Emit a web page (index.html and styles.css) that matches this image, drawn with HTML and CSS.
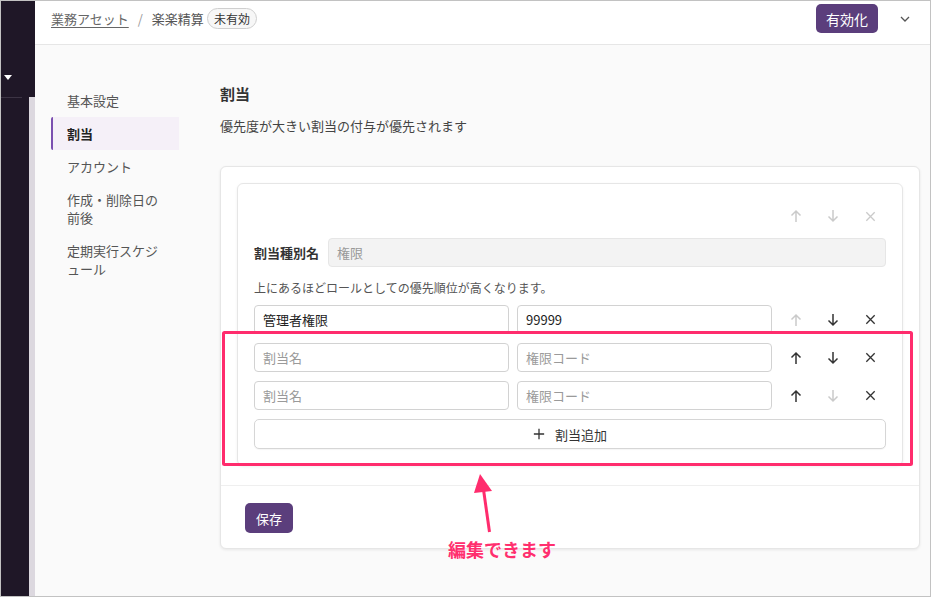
FILE: index.html
```html
<!DOCTYPE html>
<html lang="ja">
  <head>
    <meta charset="UTF-8" />
    <meta name="viewport" content="width=device-width, initial-scale=1.0" />
    <title>楽楽精算 - 割当</title>
    <link rel="stylesheet" href="styles.css">
  </head>
  <body>
    <div class="app">
      <aside class="rail">
        <div class="rail-top"><span class="caret"></span></div>
        <div class="rail-rule"></div>
        <div class="rail-bottom">
          <div class="rail-dark"></div>
          <div class="rail-light"></div>
        </div>
      </aside>

      <div class="main">
        <header class="topbar">
          <div class="crumbs">
            <a class="crumb-link" href="#">業務アセット</a>
            <span class="crumb-sep">/</span>
            <span class="crumb-current">楽楽精算</span>
            <span class="badge">未有効</span>
          </div>
          <div class="topbar-actions">
            <button class="btn-primary">有効化</button>
            <svg class="chevron" viewBox="0 0 10 6">
              <path d="M1 1l4 4 4-4" />
            </svg>
          </div>
        </header>

        <div class="page">
          <nav class="side-nav">
            <a href="#" class="nav-item">基本設定</a>
            <a href="#" class="nav-item active">割当</a>
            <a href="#" class="nav-item">アカウント</a>
            <a href="#" class="nav-item">作成・削除日の<br />前後</a>
            <a href="#" class="nav-item">定期実行スケジ<br />ュール</a>
          </nav>

          <section class="content">
            <h2 class="title">割当</h2>
            <p class="lead">優先度が大きい割当の付与が優先されます</p>

            <div class="card">
              <div class="card-body">
                <div class="group">
                  <div class="group-tools">
                    <button class="icon-btn muted"><svg viewBox="0 0 14 14"><path d="M7 13V2M2.5 6.5L7 2l4.5 4.5" /></svg></button>
                    <button class="icon-btn muted"><svg viewBox="0 0 14 14"><path d="M7 1v11M2.5 7.5L7 12l4.5-4.5" /></svg></button>
                    <button class="icon-btn muted"><svg class="x" viewBox="0 0 14 14"><path d="M2.5 2.5l9 9M11.5 2.5l-9 9" /></svg></button>
                  </div>

                  <div class="type-row">
                    <label class="type-label">割当種別名</label>
                    <input class="field field-disabled" type="text" value="権限" disabled />
                  </div>

                  <p class="hint">上にあるほどロールとしての優先順位が高くなります。</p>

                  <div class="rows">
                    <div class="row">
                      <input class="field" type="text" value="管理者権限" />
                      <input class="field" type="text" value="99999" />
                      <div class="row-tools">
                        <button class="icon-btn muted"><svg viewBox="0 0 14 14"><path d="M7 13V2M2.5 6.5L7 2l4.5 4.5" /></svg></button>
                        <button class="icon-btn"><svg viewBox="0 0 14 14"><path d="M7 1v11M2.5 7.5L7 12l4.5-4.5" /></svg></button>
                        <button class="icon-btn"><svg class="x" viewBox="0 0 14 14"><path d="M2.5 2.5l9 9M11.5 2.5l-9 9" /></svg></button>
                      </div>
                    </div>
                    <div class="row">
                      <input class="field" type="text" placeholder="割当名" />
                      <input class="field" type="text" placeholder="権限コード" />
                      <div class="row-tools">
                        <button class="icon-btn"><svg viewBox="0 0 14 14"><path d="M7 13V2M2.5 6.5L7 2l4.5 4.5" /></svg></button>
                        <button class="icon-btn"><svg viewBox="0 0 14 14"><path d="M7 1v11M2.5 7.5L7 12l4.5-4.5" /></svg></button>
                        <button class="icon-btn"><svg class="x" viewBox="0 0 14 14"><path d="M2.5 2.5l9 9M11.5 2.5l-9 9" /></svg></button>
                      </div>
                    </div>
                    <div class="row">
                      <input class="field" type="text" placeholder="割当名" />
                      <input class="field" type="text" placeholder="権限コード" />
                      <div class="row-tools">
                        <button class="icon-btn"><svg viewBox="0 0 14 14"><path d="M7 13V2M2.5 6.5L7 2l4.5 4.5" /></svg></button>
                        <button class="icon-btn muted"><svg viewBox="0 0 14 14"><path d="M7 1v11M2.5 7.5L7 12l4.5-4.5" /></svg></button>
                        <button class="icon-btn"><svg class="x" viewBox="0 0 14 14"><path d="M2.5 2.5l9 9M11.5 2.5l-9 9" /></svg></button>
                      </div>
                    </div>
                  </div>

                  <button class="add-btn">
                    <svg viewBox="0 0 14 14"><path d="M7 1v12M1 7h12" /></svg>
                    割当追加
                  </button>
                </div>
              </div>
              <div class="card-footer">
                <button class="btn-primary btn-save">保存</button>
              </div>
            </div>
          </section>
        </div>
      </div>

      <!-- annotation drawn over the screenshot -->
      <svg class="annotation" viewBox="0 0 931 597">
        <rect x="223.5" y="332.5" width="688" height="132" rx="1" />
        <path class="arrow-shaft" d="M489.5 532L483 486" />
        <path class="arrow-head" d="M480 474L474 493L492 491Z" />
      </svg>
      <div class="annotation-label">編集できます</div>
    </div>
  </body>
</html>
```

FILE: styles.css
```css
* {
    box-sizing: border-box;
}
body {
    margin: 0;
    font-family: "Noto Sans CJK JP", "Noto Sans", sans-serif;
    color: #333;
    background-color: #fff;
}
button, input {
    font-family: inherit;
}
.app {
    position: relative;
    width: 931px;
    height: 597px;
    border: 1px solid #c2c2c2;
    display: flex;
    overflow: hidden;
    background-color: #fafafa;
}

/* dark rail on the far left */
.rail {
    width: 34px;
    display: flex;
    flex-direction: column;
    flex-shrink: 0;
}
.rail-top {
    height: 96px;
    background-color: #1f1727;
    padding: 74px 0 0 3px;
}
.caret {
    display: block;
    width: 0;
    height: 0;
    border-left: 4px solid transparent;
    border-right: 4px solid transparent;
    border-top: 5px solid #fff;
}
.rail-rule {
    height: 1px;
    background: linear-gradient(to right, #3c3444 21px, #1f1727 21px, #1f1727 28px, #dcd8de 28px);
}
.rail-bottom {
    flex: 1;
    display: flex;
}
.rail-dark {
    width: 28px;
    background-color: #1f1727;
}
.rail-light {
    width: 6px;
    background-color: #dcd8df;
}

.main {
    flex: 1;
    display: flex;
    flex-direction: column;
    min-width: 0;
}

/* top bar */
.topbar {
    height: 44px;
    background-color: #fff;
    border-bottom: 1px solid #e6e6e6;
    display: flex;
    justify-content: space-between;
    align-items: flex-start;
    padding: 3px 0 0 16px;
}
.crumbs {
    height: 29px;
    display: flex;
    align-items: center;
    font-size: 13px;
    color: #555;
}
.crumb-link {
    color: #666;
    text-decoration: underline;
    text-underline-offset: 3px;
}
.crumb-sep {
    color: #999;
    margin: 0 9px;
}
.badge {
    margin-left: 3px;
    height: 21px;
    line-height: 19px;
    padding: 0 6px;
    border: 1px solid #cfcfcf;
    border-radius: 11px;
    background-color: #f7f7f7;
    font-size: 12px;
    color: #333;
}
.topbar-actions {
    display: flex;
    align-items: center;
    height: 29px;
}
.btn-primary {
    background-color: #5b3e7c;
    color: #fff;
    border: none;
    border-radius: 5px;
    height: 29px;
    padding: 0 10px;
    font-size: 14px;
    cursor: pointer;
}
.chevron {
    width: 10px;
    height: 6px;
    margin: 0 20px 0 22px;
    fill: none;
    stroke: #555;
    stroke-width: 1.3;
}

/* page body */
.page {
    flex: 1;
    display: flex;
}
.side-nav {
    width: 129px;
    margin-left: 16px;
    padding-top: 39px;
    display: flex;
    flex-direction: column;
}
.nav-item {
    display: block;
    padding: 7.5px 14px;
    line-height: 18px;
    font-size: 13px;
    color: #555;
    text-decoration: none;
    border-left: 2px solid transparent;
}
.nav-item.active {
    background-color: #f5f0f8;
    border-left-color: #7b4fb0;
    border-radius: 2px 0 0 2px;
    color: #222;
    font-weight: bold;
}

.content {
    flex: 1;
    margin: 0 10px 0 41px;
    padding-top: 39px;
}
.title {
    margin: 0;
    font-size: 15px;
    line-height: 20px;
    color: #333;
}
.lead {
    margin: 12px 0 0;
    font-size: 13px;
    line-height: 20px;
    color: #444;
}

.card {
    margin-top: 30px;
    background-color: #fff;
    border: 1px solid #e6e6e6;
    border-radius: 6px;
    box-shadow: 0 1px 3px rgba(0, 0, 0, 0.08);
}
.card-body {
    padding: 16px 16px 19px;
}
.card-footer {
    border-top: 1px solid #efefef;
    padding: 17px 24px 15px;
}
.btn-save {
    height: 30px;
    padding: 0 11px;
    font-size: 13px;
}

.group {
    border: 1px solid #e6e6e6;
    border-radius: 6px;
    box-shadow: 0 1px 3px rgba(0, 0, 0, 0.06);
    padding: 16px;
}
.group-tools {
    height: 32px;
    display: flex;
    justify-content: flex-end;
    align-items: center;
    gap: 5px;
}
.icon-btn {
    width: 32px;
    height: 29px;
    padding: 0;
    border: none;
    background: none;
    display: flex;
    align-items: center;
    justify-content: center;
    cursor: pointer;
}
.icon-btn svg {
    width: 14px;
    height: 14px;
    fill: none;
    stroke: #333;
    stroke-width: 1.5;
}
.icon-btn svg.x {
    width: 13px;
    height: 13px;
    stroke-width: 1.4;
}
.icon-btn.muted svg {
    stroke: #cacaca;
}

.type-row {
    margin-top: 6px;
    display: flex;
    align-items: center;
}
.type-label {
    width: 74px;
    font-size: 13px;
    font-weight: bold;
    color: #333;
}
.field {
    flex: 1;
    min-width: 0;
    height: 29px;
    padding: 0 8px;
    border: 1px solid #d2d2d2;
    border-radius: 4px;
    font-size: 13px;
    color: #222;
    background-color: #fff;
}
.field::placeholder {
    color: #9a9a9a;
}
.field-disabled {
    background-color: #f3f3f3;
    border-color: #e6e6e6;
    color: #999;
}
.hint {
    margin: 12px 0 0;
    font-size: 12px;
    line-height: 18px;
    color: #555;
}
.rows {
    margin-top: 8px;
    display: flex;
    flex-direction: column;
    gap: 9px;
}
.row {
    display: flex;
    gap: 8px;
}
.row .field {
    width: 255px;
    flex: none;
}
.row-tools {
    display: flex;
    gap: 5px;
}
.add-btn {
    margin-top: 9px;
    width: 100%;
    height: 30px;
    border: 1px solid #d6d6d6;
    border-radius: 5px;
    background-color: #fff;
    display: flex;
    align-items: center;
    justify-content: center;
    gap: 10px;
    font-size: 13px;
    color: #333;
    box-shadow: 0 1px 1px rgba(0, 0, 0, 0.04);
    cursor: pointer;
}
.add-btn svg {
    width: 12px;
    height: 12px;
    fill: none;
    stroke: #333;
    stroke-width: 1.5;
}

/* overlay annotation */
.annotation {
    position: absolute;
    left: -1px;
    top: -1px;
    width: 931px;
    height: 597px;
    pointer-events: none;
}
.annotation rect {
    fill: none;
    stroke: #ff2c6d;
    stroke-width: 3;
}
.arrow-shaft {
    stroke: #ff2c6d;
    stroke-width: 3;
    fill: none;
}
.arrow-head {
    fill: #ff2c6d;
}
.annotation-label {
    position: absolute;
    left: 447px;
    top: 537px;
    font-size: 18px;
    line-height: 22px;
    font-weight: bold;
    color: #ff2f6e;
    text-shadow: 0 0 2px #fff;
}
```
